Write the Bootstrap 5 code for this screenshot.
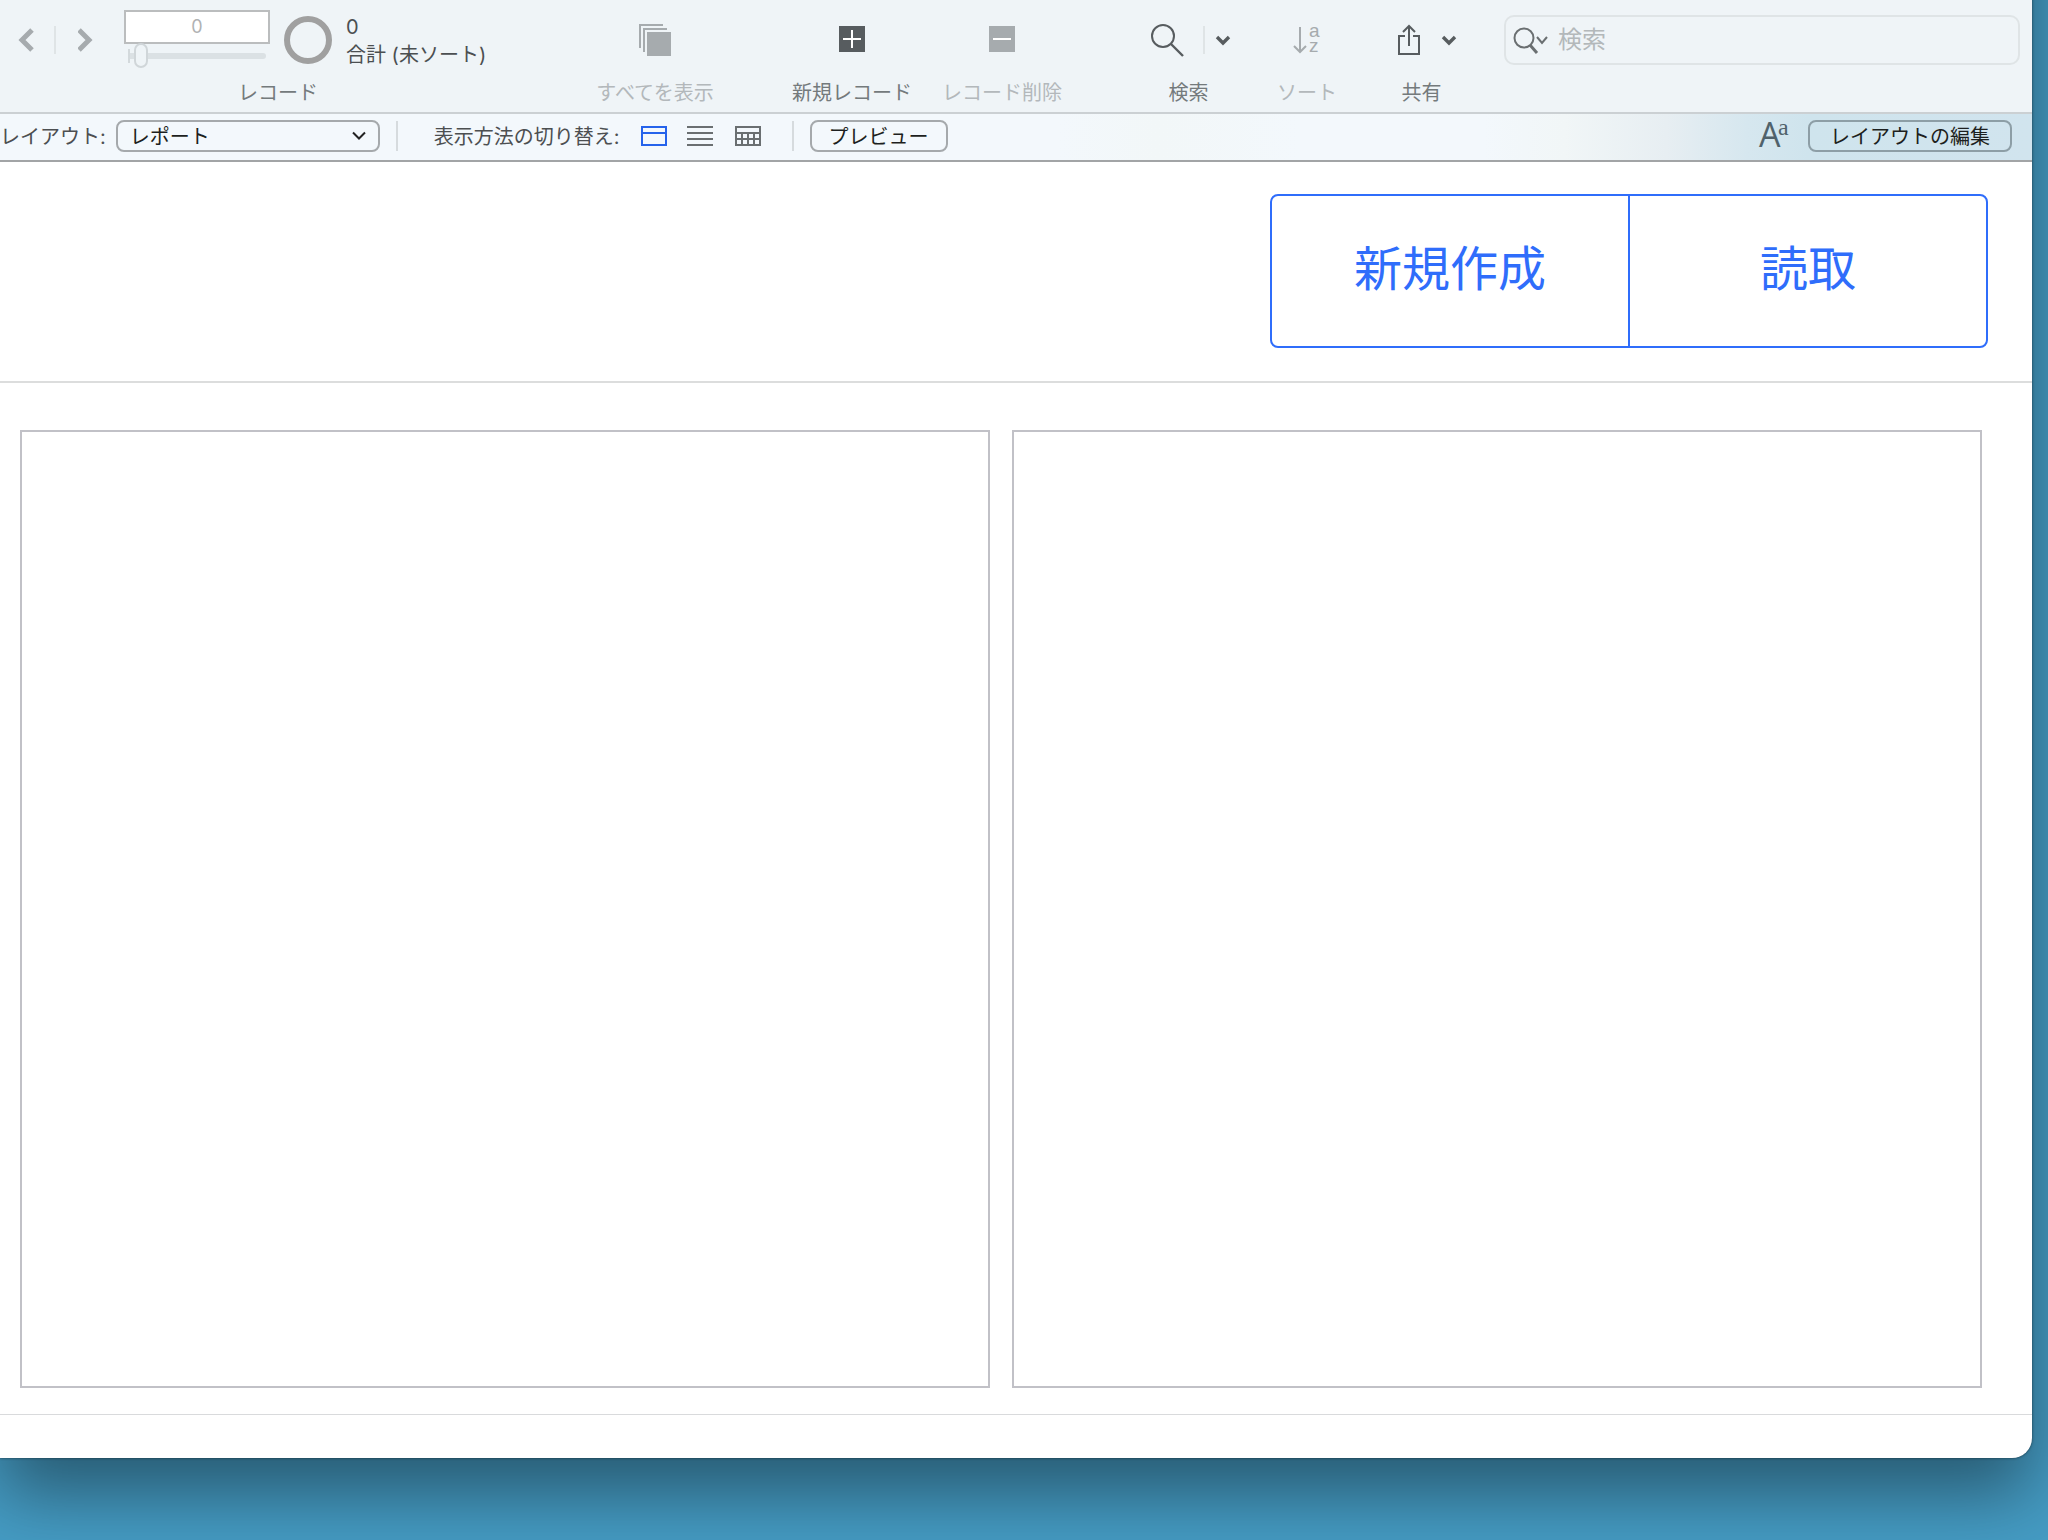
<!DOCTYPE html>
<html lang="ja">
<head>
<meta charset="utf-8">
<meta name="viewport" content="width=device-width, initial-scale=1">
<title>レポート</title>
<link href="https://cdn.jsdelivr.net/npm/bootstrap@5.3.0/dist/css/bootstrap.min.css" rel="stylesheet">
<style>
:root{--ink:#4b4f51;--tool:#747a7c;--off:#b3b8bb;--line:#dfe4e6;--edge:#a5a9ac;--accent:#2f6dfb}
body{font-family:Inter,"Noto Sans CJK JP",sans-serif;font-size:20px;line-height:28px;color:var(--ink);background:#459cc4}
.desktop{min-height:100vh;overflow:hidden;padding:0 16px 82px 0}
/* the window runs on above the screen, so that its shadow stays even at the top */
.app-window{margin-top:-160px;padding-top:160px;background:#fff;border-radius:0 0 20px 0;box-shadow:0 36px 70px rgba(0,0,0,.42),0 0 3px rgba(0,0,0,.55)}
.toolbar{background:#eff4f7;height:112px;margin-top:-160px;padding-top:160px;box-sizing:content-box}
.tool-top{height:80px;display:flex;align-items:center}
.tool-name{line-height:26px;color:var(--tool);white-space:nowrap}
.tool{display:flex;flex-direction:column;align-items:center;flex:none}
.plain{border:0;background:none;padding:0;color:#575c5f;display:flex;align-items:center}
.plain:disabled{color:#a6abae}
.plain:disabled .tool-name{color:var(--off)}
.tool.plain{display:flex;flex-direction:column}
svg{display:block;flex:none}
.rule{width:2px;height:28px;background:var(--line);flex:none}
.record-set{width:554px;padding-left:18px}
.show-all{margin-left:41px;width:120px}
.new-rec{margin-left:77px;width:120px}
.del-rec{margin-left:30px;width:120px}
.find-set{margin-left:84px;width:85px}
.sort-set{margin-left:46px;width:60px}
.share-set{margin-left:49px;width:71px}
.rec-nav{margin:0 14px 2px 30px}
.nav-rule{margin:0 22px 0 18px}
.totals{margin-left:14px;white-space:nowrap;padding-top:2px}
.rec-no{width:146px;height:34px;border:2px solid #bbbdbe;background:#fff;color:#b0b2b3;text-align:center;font-size:18px;padding:0;display:block}
.slide{height:25px;padding-left:4px;display:flex;align-items:center}
.slide::before{content:"";width:2px;height:14px;background:#d3d9dc}
.slide::after{content:"";width:4px;height:6px;background:#dbe1e4;order:1}
.slide input{order:2;appearance:none;width:132px;height:25px;background:none;margin:0}
.slide input::-webkit-slider-runnable-track{height:6px;border-radius:3px;background:#dbe1e4}
.slide input::-webkit-slider-thumb{appearance:none;width:14px;height:25px;margin-top:-10px;border:2px solid #d0d6d9;border-radius:7px;background:#eff4f7}
.search-box{margin:15px 12px 0 47px;height:50px;border:2px solid var(--line);border-radius:10px;padding-left:7px;color:#6a6f71}
.search-box input{border:0;background:none;font-size:24px;padding:0;flex:1;min-width:0;margin-left:9px;outline:0}
.search-box input::placeholder{color:#b3b8ba;opacity:1}
.layout-bar{border-top:2px solid #cbd0d3;border-bottom:2px solid #a2a4a6;height:50px;padding-bottom:2px;color:#4c4f51;background:linear-gradient(90deg,#f3f8fc 0,#f3f8fc 52%,#f2f7f8 57%,#f3f8fc 64%,#f3f8fc 73%,#f1f6f7 77%,#e7eef2 82%,#d6e7ef 86%,#cfe4ed 89%,#d1e4ee 100%)}
.layout-bar label,.layout-bar .caption{white-space:nowrap;flex:none;padding-top:2px}
.push{height:32px;border:2px solid var(--edge);border-radius:8px;background-color:transparent;color:#1d1f20;font-size:20px;line-height:26px;padding:2px 0 0;white-space:nowrap;flex:none}
.layout-pick{appearance:none;width:264px;margin-left:10px;padding-left:12px;background:url("data:image/svg+xml,%3Csvg xmlns='http://www.w3.org/2000/svg' width='14' height='10' fill='none' stroke='%23222' stroke-width='2'%3E%3Cpath d='M1 1.5l6 6 6-6'/%3E%3C/svg%3E") no-repeat right 12px center}
.bar-rule{height:30px;background:#d6dbde}
.caption{margin-left:36px}
.views{margin:0 27px 0 21px}
.list-view{margin:0 22px 0 20px}
.preview{width:138px;margin-left:16px}
.edit{width:204px;border-color:#8d9ea6;margin:0 20px 0 18px}
.page-head{padding:32px 44px 33px;border-bottom:2px solid #dcdddd}
.actions .btn{width:360px;height:154px;border:2px solid var(--accent);border-radius:8px;font-size:48px;line-height:64px;color:var(--accent);padding:0 0 4px}
.actions.btn-group > .btn:not(:first-child){margin-left:-2px}
.actions .btn:hover{background:#eef3ff}
.panels{padding:47px 50px 26px 20px;gap:22px;border-bottom:1px solid #d9dadc}
.panel{flex:1;height:958px;border:2px solid #c1c1c7}
.page-foot{height:43px}
</style>
</head>
<body>
<div class="desktop">
<div class="app-window">
  <header class="toolbar d-flex align-items-start">
    <div class="tool record-set align-items-stretch">
      <div class="tool-top">
        <button class="plain" disabled aria-label="前のレコード"><svg width="18" height="28" fill="none" stroke="currentColor" stroke-width="5"><path d="M14 4L4 14l10 10"/></svg></button>
        <span class="rule nav-rule"></span>
        <button class="plain" disabled aria-label="次のレコード"><svg width="16" height="28" fill="none" stroke="currentColor" stroke-width="5"><path d="M1 4l10 10L1 24"/></svg></button>
        <div class="rec-nav">
          <input class="rec-no" type="text" value="0" disabled aria-label="レコード番号">
          <div class="slide"><input type="range" min="0" max="10" value="0" disabled aria-label="レコードの移動"></div>
        </div>
        <svg width="48" height="48" fill="none" stroke="#a0a0a0" stroke-width="6"><circle cx="24" cy="24" r="21"/></svg>
        <div class="totals">0<br>合計 (未ソート)</div>
      </div>
      <div class="tool-name text-center me-3">レコード</div>
    </div>
    <button class="tool plain show-all" disabled>
      <span class="tool-top"><svg width="32" height="32" fill="currentColor"><path d="M0 0h24v2H2v22H0zM4 4h24v2H6v22H4zM8 8h24v24H8z"/></svg></span>
      <span class="tool-name">すべてを表示</span>
    </button>
    <button class="tool plain new-rec">
      <span class="tool-top"><svg width="26" height="28"><path fill="currentColor" d="M0 0h26v26H0z"/><path stroke="#fff" stroke-width="2" d="M4 13h18M13 4v18"/></svg></span>
      <span class="tool-name">新規レコード</span>
    </button>
    <button class="tool plain del-rec" disabled>
      <span class="tool-top"><svg width="26" height="28"><path fill="currentColor" d="M0 0h26v26H0z"/><path stroke="#fff" stroke-width="2" d="M4 13h18"/></svg></span>
      <span class="tool-name">レコード削除</span>
    </button>
    <div class="tool find-set">
      <div class="tool-top w-100 justify-content-between">
        <button class="plain ms-1" aria-label="検索"><svg width="34" height="34" fill="none" stroke="currentColor" stroke-width="2"><circle cx="13" cy="13" r="11"/><path d="M21 21l12 12" stroke-width="2.4"/></svg></button>
        <span class="rule ms-2"></span>
        <button class="plain" aria-label="検索メニュー"><svg width="16" height="12" fill="none" stroke="currentColor" stroke-width="3.4"><path d="M2 3l6 6 6-6"/></svg></button>
      </div>
      <div class="tool-name">検索</div>
    </div>
    <button class="tool plain sort-set" disabled>
      <span class="tool-top"><svg width="32" height="44" fill="none" stroke="currentColor" stroke-width="2"><path d="M9 9v25M3 28l6 6 6-6"/><g fill="currentColor" stroke="none" font-family="Liberation Sans" font-size="19"><text x="18" y="19">a</text><text x="18" y="34">z</text></g></svg></span>
      <span class="tool-name">ソート</span>
    </button>
    <div class="tool share-set">
      <div class="tool-top w-100 justify-content-between">
        <button class="plain ms-2 ps-1" aria-label="共有"><svg width="22" height="32" fill="none" stroke="currentColor" stroke-width="2"><path d="M7 12H1v18h20V12h-6M11 22V2M5 8l6-6 6 6"/></svg></button>
        <button class="plain" aria-label="共有メニュー"><svg width="16" height="12" fill="none" stroke="currentColor" stroke-width="3.4"><path d="M2 3l6 6 6-6"/></svg></button>
      </div>
      <div class="tool-name">共有</div>
    </div>
    <div class="search-box d-flex align-items-center flex-grow-1">
      <svg width="36" height="28" fill="none" stroke="currentColor" stroke-width="2"><circle cx="11" cy="12" r="9.5"/><path d="M17 19l7 8" stroke-width="3"/><path d="M24 11l5 6 5-6"/></svg>
      <input type="search" placeholder="検索" aria-label="検索">
    </div>
  </header>

  <nav class="layout-bar d-flex align-items-center">
    <label for="layout">レイアウト:</label>
    <select id="layout" class="push layout-pick"><option>レポート</option></select>
    <span class="rule bar-rule ms-3"></span>
    <span class="caption">表示方法の切り替え:</span>
    <div class="d-flex views">
      <button class="plain" aria-label="フォーム形式"><svg width="26" height="20" fill="none" stroke="#2563eb" stroke-width="2"><path d="M1 1h24v18H1zM1 7h24"/></svg></button>
      <button class="plain list-view" aria-label="リスト形式"><svg width="26" height="20" stroke="#6a6f71" stroke-width="2"><path d="M0 1h26M0 7h26M0 13h26M0 19h26"/></svg></button>
      <button class="plain" aria-label="表形式"><svg width="26" height="20" fill="none" stroke="#6a6f71" stroke-width="2"><path d="M1 1h24v18H1zM1 7h24M1 13h24M7 7v12M13 7v12M19 7v12"/></svg></button>
    </div>
    <span class="rule bar-rule ms-1"></span>
    <button class="push preview">プレビュー</button>
    <button class="plain ms-auto" aria-label="書式設定バー"><svg width="32" height="46" fill="#50626b"><text x="1" y="34" font-family="Open Sans" font-size="34">A</text><text x="20" y="22" font-family="Liberation Serif" font-size="24">a</text></svg></button>
    <button class="push edit">レイアウトの編集</button>
  </nav>

  <main>
    <section class="page-head d-flex justify-content-end">
      <div class="btn-group actions" role="group" aria-label="操作">
        <button type="button" class="btn">新規作成</button>
        <button type="button" class="btn">読取</button>
      </div>
    </section>
    <section class="panels d-flex">
      <div class="panel"></div>
      <div class="panel"></div>
    </section>
    <div class="page-foot"></div>
  </main>
</div>
</div>
<script src="https://cdn.jsdelivr.net/npm/bootstrap@5.3.0/dist/js/bootstrap.bundle.min.js"></script>
</body>
</html>
